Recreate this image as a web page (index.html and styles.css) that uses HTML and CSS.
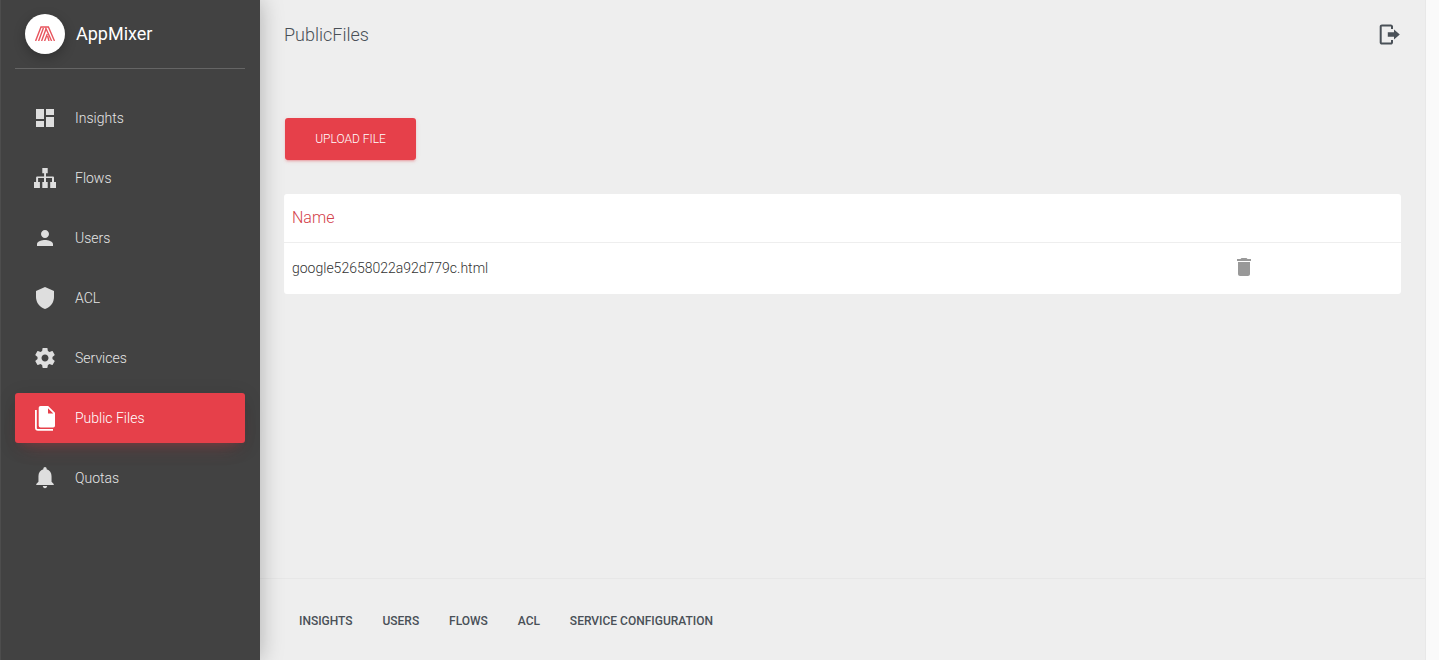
FILE: index.html
```html
<!DOCTYPE html>
<html lang="en">
<head>
<meta charset="utf-8">
<title>AppMixer - Public Files</title>
<link rel="stylesheet" href="styles.css">
</head>
<body>
<div class="shell">
  <aside class="sidebar">
    <div class="brand">
      <span class="brand-logo">
        <svg viewBox="0 0 20 15" width="20" height="15" fill="none" stroke="#e8555e" stroke-width="1.4">
          <path d="M0.6 15L6 1H13.4L19.5 15"/>
          <path d="M3.6 15L8.4 2M6.6 15L11 3M9.6 15L12.3 8"/>
          <path d="M10.5 1.5L16.6 15M12.6 10L14 15"/>
        </svg>
      </span>
      <span class="brand-name">AppMixer</span>
    </div>
    <nav class="nav">
      <a class="nav-item"><svg class="nav-icon" viewBox="0 0 24 24"><path d="M3 13h8V3H3v10zm0 8h8v-6H3v6zm10 0h8V11h-8v10zm0-18v6h8V3h-8z"/></svg><span>Insights</span></a>
      <a class="nav-item"><svg class="nav-icon" viewBox="0 0 24 24"><path d="M9.3 2h5.4v5.3h-1.7v3.2h7a1 1 0 0 1 1 1V16h2v6h-5.8v-6h1.8v-4h-6v4h1.7v6H9.3v-6H11v-4H5.1v4h1.8v6H1v-6h2.1v-4.5a1 1 0 0 1 1-1h7V7.3H9.3z"/></svg><span>Flows</span></a>
      <a class="nav-item"><svg class="nav-icon" viewBox="0 0 24 24"><path d="M12 12c2.21 0 4-1.79 4-4s-1.79-4-4-4-4 1.79-4 4 1.79 4 4 4zm0 2c-2.67 0-8 1.34-8 4v2h16v-2c0-2.66-5.33-4-8-4z"/></svg><span>Users</span></a>
      <a class="nav-item"><svg class="nav-icon" viewBox="0 0 24 24"><path d="M12 1L3 5v6c0 5.55 3.84 10.74 9 12 5.16-1.26 9-6.45 9-12V5l-9-4z"/></svg><span>ACL</span></a>
      <a class="nav-item"><svg class="nav-icon" viewBox="0 0 24 24"><path d="M19.43 12.98c.04-.32.07-.64.07-.98s-.03-.66-.07-.98l2.11-1.65c.19-.15.24-.42.12-.64l-2-3.46c-.12-.22-.39-.3-.61-.22l-2.49 1c-.52-.4-1.08-.73-1.69-.98l-.38-2.65C14.46 2.18 14.25 2 14 2h-4c-.25 0-.46.18-.49.42l-.38 2.65c-.61.25-1.17.59-1.69.98l-2.49-1c-.23-.09-.49 0-.61.22l-2 3.46c-.13.22-.07.49.12.64l2.11 1.65c-.04.32-.07.65-.07.98s.03.66.07.98l-2.11 1.65c-.19.15-.24.42-.12.64l2 3.46c.12.22.39.3.61.22l2.49-1c.52.4 1.08.73 1.69.98l.38 2.65c.03.24.24.42.49.42h4c.25 0 .46-.18.49-.42l.38-2.65c.61-.25 1.17-.59 1.69-.98l2.49 1c.23.09.49 0 .61-.22l2-3.46c.12-.22.07-.49-.12-.64l-2.11-1.65zM12 15.5c-1.93 0-3.5-1.57-3.5-3.5s1.57-3.5 3.5-3.5 3.5 1.57 3.5 3.5-1.57 3.5-3.5 3.5z"/></svg><span>Services</span></a>
      <a class="nav-item active"><svg class="nav-icon" viewBox="0 0 24 24"><path d="M2 4h1.8v18.2c0 .4.3.8.8.8H20v1.8H5a3 3 0 0 1-3-3z"/><path fill-rule="evenodd" d="M7.5 0h7.7L22 6.8V19.7a1.8 1.8 0 0 1-1.8 1.8H7.5a1.8 1.8 0 0 1-1.8-1.8V1.8A1.8 1.8 0 0 1 7.5 0zM15 2.3V7.5h5.3z"/></svg><span>Public Files</span></a>
      <a class="nav-item"><svg class="nav-icon" viewBox="1 1.6 22 22"><path d="M12 22c1.1 0 2-.9 2-2h-4c0 1.1.89 2 2 2zm6-6v-5c0-3.07-1.64-5.64-4.5-6.32V4c0-.83-.67-1.5-1.5-1.5s-1.5.67-1.5 1.5v.68C7.63 5.36 6 7.92 6 11v5l-2 2v1h16v-1l-2-2z"/></svg><span>Quotas</span></a>
    </nav>
  </aside>
  <main class="main">
    <header class="topbar">
      <h1 class="page-title">PublicFiles</h1>
      <svg class="logout" viewBox="0 0 21 21" fill="none">
        <path d="M13 5V2.4A1.2 1.2 0 0 0 11.8 1.4H2.9A1.2 1.2 0 0 0 1.7 2.6V18.4A1.2 1.2 0 0 0 2.9 19.6H11.8A1.2 1.2 0 0 0 13 18.4V16" stroke="#495057" stroke-width="2"/>
        <path d="M8.8 8.2H15V5.5L20.8 10.5L15 15.5V12.8H8.8z" fill="#495057"/>
      </svg>
    </header>
    <section class="content">
      <button class="upload" type="button">UPLOAD FILE</button>
      <div class="card">
        <div class="card-head">Name</div>
        <div class="card-row">
          <span class="file-name">google52658022a92d779c.html</span>
          <svg class="trash" viewBox="0 0 24 24"><path d="M6 19c0 1.1.9 2 2 2h8c1.1 0 2-.9 2-2V7H6v12zM19 4h-3.5l-1-1h-5l-1 1H5v2h14V4z"/></svg>
        </div>
      </div>
    </section>
    <footer class="footer">
      <a>INSIGHTS</a>
      <a>USERS</a>
      <a>FLOWS</a>
      <a>ACL</a>
      <a>SERVICE CONFIGURATION</a>
    </footer>
  </main>
  <div class="scroll-track"></div>
</div>
</body>
</html>
```

FILE: styles.css
```css
* { box-sizing: border-box; }
html, body { margin: 0; height: 100%; overflow: hidden; }
body { font-family: Roboto, "Liberation Sans", sans-serif; background: #eeeeee; color: #3c4858; }
.shell { display: flex; height: 660px; }

.sidebar {
  width: 260px;
  flex: none;
  background: #424242;
  border-left: 1px solid #4d4d4d;
  padding: 0 15px 0 14px;
  box-shadow: 0 0 22px rgba(0, 0, 0, 0.28);
  position: relative;
  z-index: 2;
}
.brand {
  display: flex;
  align-items: center;
  gap: 11px;
  height: 69px;
  padding: 0 0 1px 10px;
  border-bottom: 1px solid #656565;
}
.brand-logo {
  width: 40px;
  height: 40px;
  border-radius: 50%;
  background: #fff;
  display: flex;
  align-items: center;
  justify-content: center;
  box-shadow: 0 4px 12px rgba(0, 0, 0, 0.25);
}
.brand-name { font-size: 18px; color: #fff; line-height: 24px; padding-top: 1px; }

.nav { display: flex; flex-direction: column; gap: 10px; padding-top: 24px; }
.nav-item {
  display: flex;
  align-items: center;
  height: 50px;
  padding-left: 18px;
  gap: 18px;
  border-radius: 3px;
  font-size: 14px;
  font-weight: 300;
  color: #e6e6e6;
}
.nav-icon { width: 24px; height: 24px; fill: #dedede; flex: none; overflow: visible; }
.nav-item.active {
  background: #e6404a;
  color: #fff;
  box-shadow: 0 12px 20px -10px rgba(230, 64, 74, 0.28), 0 4px 20px 0 rgba(0, 0, 0, 0.12), 0 7px 8px -5px rgba(230, 64, 74, 0.2);
}
.nav-item.active .nav-icon { fill: #fff; }

.main { flex: 1; min-width: 0; display: flex; flex-direction: column; background: #eeeeee; }
.topbar {
  display: flex;
  align-items: center;
  justify-content: space-between;
  height: 68px;
  padding: 0 25.5px 0 24px;
}
.page-title { margin: 2px 0 0; font-size: 18px; font-weight: 300; color: #495057; line-height: 24px; }
.logout { width: 21px; height: 21px; }

.content { flex: 1; padding: 50px 24px 0; }
.upload {
  display: block;
  width: 131px;
  height: 42px;
  margin-left: 1px;
  border: 0;
  border-radius: 3px;
  background: #e6404a;
  color: #fff;
  font-family: inherit;
  font-size: 12px;
  font-weight: 300;
  box-shadow: 0 2px 2px 0 rgba(230, 64, 74, 0.14), 0 3px 1px -2px rgba(230, 64, 74, 0.2), 0 1px 5px 0 rgba(230, 64, 74, 0.12);
}
.card { margin-top: 34px; background: #fff; border-radius: 3px; }
.card-head {
  height: 49px;
  padding: 0 8px 2px;
  display: flex;
  align-items: center;
  border-bottom: 1px solid #eeeeee;
  font-size: 16px;
  font-weight: 300;
  color: #d3414a;
}
.card-row {
  height: 51px;
  padding: 0 145px 2px 8px;
  display: flex;
  align-items: center;
  justify-content: space-between;
  font-size: 14px;
  font-weight: 300;
  color: #333;
}
.trash { width: 24px; height: 24px; fill: #999; margin-bottom: 2px; }

.footer {
  height: 82px;
  flex: none;
  border-top: 1px solid #e7e7e7;
  display: flex;
  align-items: center;
  gap: 29.9px;
  padding: 2px 0 0 39px;
  font-size: 12px;
  font-weight: 500;
  color: #495057;
}
.scroll-track { width: 14px; flex: none; background: #fafafa; border-left: 1px solid #e8e8e8; }
```
